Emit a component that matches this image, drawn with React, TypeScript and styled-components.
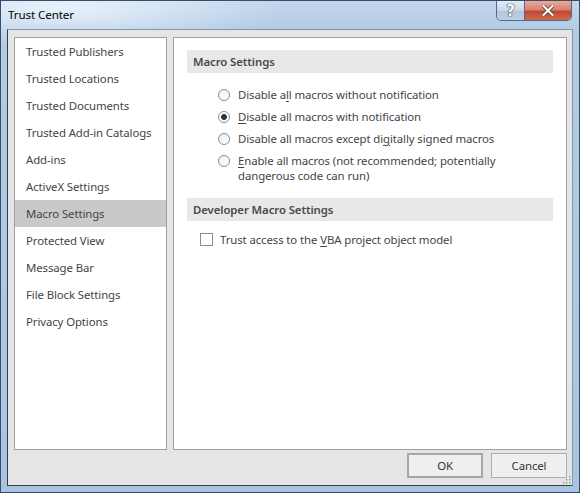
import styled, { createGlobalStyle } from 'styled-components'

const GlobalStyle = createGlobalStyle`
    html, body {
        margin: 0;
        padding: 0;
        background: #ffffff;
    }
    * {
        box-sizing: border-box;
    }
`

const navItems = [
    'Trusted Publishers',
    'Trusted Locations',
    'Trusted Documents',
    'Trusted Add-in Catalogs',
    'Add-ins',
    'ActiveX Settings',
    'Macro Settings',
    'Protected View',
    'Message Bar',
    'File Block Settings',
    'Privacy Options',
]

const App = () => {
    return (
        <>
            <GlobalStyle />
            <Window>
                <TitleBar>
                    <Title>Trust Center</Title>
                    <Caption>
                        <HelpButton>?</HelpButton>
                        <CloseButton>
                            <svg width='12' height='11' viewBox='0 0 12 11'>
                                <path d='M1.5 1 L10.5 10 M10.5 1 L1.5 10' stroke='#4a2a25' strokeWidth='3.6' strokeLinecap='square' />
                                <path d='M1.5 1 L10.5 10 M10.5 1 L1.5 10' stroke='#ffffff' strokeWidth='2.2' strokeLinecap='square' />
                            </svg>
                        </CloseButton>
                    </Caption>
                </TitleBar>
                <Client>
                    <Panels>
                        <Sidebar>
                            {navItems.map(item => (
                                <NavItem key={item} $active={item === 'Macro Settings'}>{item}</NavItem>
                            ))}
                        </Sidebar>
                        <Content>
                            <SectionHeader>Macro Settings</SectionHeader>
                            <Options>
                                <Option>
                                    <Radio />
                                    <span>Disable a<u>l</u>l macros without notification</span>
                                </Option>
                                <Option>
                                    <Radio $checked />
                                    <span><u>D</u>isable all macros with notification</span>
                                </Option>
                                <Option>
                                    <Radio />
                                    <span>Disable all macros except di<u>g</u>itally signed macros</span>
                                </Option>
                                <Option>
                                    <Radio />
                                    <span><u>E</u>nable all macros (not recommended; potentially<br />dangerous code can run)</span>
                                </Option>
                            </Options>
                            <SectionHeader>Developer Macro Settings</SectionHeader>
                            <CheckRow>
                                <Checkbox />
                                <span>Trust access to the <u>V</u>BA project object model</span>
                            </CheckRow>
                        </Content>
                    </Panels>
                    <Footer>
                        <Button $default>OK</Button>
                        <Button>Cancel</Button>
                    </Footer>
                    <Grip>
                        <svg width='9' height='9' viewBox='0 0 9 9'>
                            {[[7, 1], [4, 4], [7, 4], [1, 7], [4, 7], [7, 7]].map(([x, y]) => (
                                <rect key={`${x}-${y}`} x={x} y={y} width='1.5' height='1.5' fill='#9a9a9a' />
                            ))}
                        </svg>
                    </Grip>
                </Client>
            </Window>
        </>
    )
}

export default App

const uiFont = `'Segoe UI', 'Noto Sans', 'Open Sans', sans-serif`

const Window = styled.div`
    width: 580px;
    height: 493px;
    display: flex;
    flex-direction: column;
    padding: 0 6px 6px 6px;
    border: 1px solid #3a4d66;
    background:
        radial-gradient(ellipse 220px 40px at 60px 6px, rgba(235, 243, 252, 0.95), rgba(235, 243, 252, 0) 100%),
        linear-gradient(180deg, #c3d6ec 0%, #b3cbe6 30px, #a9c4e3 100%);
    font-family: ${uiFont};
    letter-spacing: -0.1px;
`

const TitleBar = styled.div`
    height: 28px;
    display: flex;
    align-items: flex-start;
    margin-right: -6px;
`

const Title = styled.div`
    padding-left: 1px;
    line-height: 28px;
    font-size: 11.6px;
    color: #000000;
`

const Caption = styled.div`
    margin-left: auto;
    margin-right: 7px;
    display: flex;
    height: 20px;
    border: 1px solid #4f6a8c;
    border-top: none;
    border-radius: 0 0 5px 5px;
    overflow: hidden;
`

const HelpButton = styled.div`
    width: 28px;
    display: flex;
    align-items: center;
    justify-content: center;
    border-right: 1px solid #4f6a8c;
    background: linear-gradient(180deg, #e2ebf5 0%, #c9d7e8 50%, #b1c4da 51%, #bfd0e3 100%);
    color: #ffffff;
    font: bold 15px 'DejaVu Sans', sans-serif;
    text-shadow: 0 0 1px #2a3a4e, 0 0 1px #2a3a4e, 0 0 1px #2a3a4e;
`

const CloseButton = styled.div`
    width: 46px;
    display: flex;
    align-items: center;
    justify-content: center;
    background: linear-gradient(180deg, #e9a99b 0%, #d88372 45%, #c2482f 55%, #d0694f 100%);
`

const Client = styled.div`
    position: relative;
    flex: 1;
    display: flex;
    flex-direction: column;
    padding: 7px 5px 7px 6px;
    background: #e5e5e5;
    border: 1px solid #3c3c3c;
    border-top-color: #8797ab;
    border-right-color: #8797ab;
`

const Panels = styled.div`
    height: 413px;
    display: flex;
    gap: 6px;
`

const Sidebar = styled.div`
    width: 153px;
    background: #ffffff;
    border: 1px solid #a0a0a0;
    display: flex;
    flex-direction: column;
`

const NavItem = styled.div<{ $active?: boolean }>`
    height: 27px;
    line-height: 27px;
    padding-left: 11px;
    font-size: 11.4px;
    color: #444444;
    white-space: nowrap;
    background: ${p => (p.$active ? '#c9c9c9' : 'transparent')};
`

const Content = styled.div`
    flex: 1;
    background: #ffffff;
    border: 1px solid #a0a0a0;
    padding: 12px 13px;
    display: flex;
    flex-direction: column;
    font-size: 11.4px;
    color: #444444;
`

const SectionHeader = styled.div`
    height: 23px;
    line-height: 23px;
    padding-left: 6px;
    background: #e8e8e8;
    font-weight: 600;
    color: #4a4a4a;
`

const Options = styled.div`
    display: flex;
    flex-direction: column;
    gap: 7px;
    padding: 14px 0 15px 31px;
`

const Option = styled.div`
    display: flex;
    align-items: flex-start;
    gap: 8px;
    line-height: 15px;

    u {
        text-decoration-thickness: 1px;
        text-underline-offset: 2px;
    }
`

const Radio = styled.span<{ $checked?: boolean }>`
    flex: none;
    width: 12px;
    height: 12px;
    margin-top: 2px;
    border-radius: 50%;
    border: 1px solid #8d8d8d;
    background: ${p =>
        p.$checked
            ? 'radial-gradient(circle, #333333 0 2.6px, #ffffff 3.2px)'
            : 'linear-gradient(135deg, #f0f0f0, #ffffff)'};
`

const CheckRow = styled.div`
    display: flex;
    align-items: flex-start;
    gap: 7px;
    margin-top: 11px;
    padding-left: 13px;
    line-height: 15px;

    u {
        text-decoration-thickness: 1px;
        text-underline-offset: 2px;
    }
`

const Checkbox = styled.span`
    flex: none;
    width: 13px;
    height: 13px;
    margin-top: 1px;
    border: 1px solid #8d8d8d;
    background: #ffffff;
`

const Footer = styled.div`
    display: flex;
    justify-content: flex-end;
    gap: 8px;
    margin-top: 3px;
`

const Button = styled.div<{ $default?: boolean }>`
    width: 76px;
    height: 25px;
    display: flex;
    align-items: center;
    justify-content: center;
    font-size: 11.4px;
    color: #333333;
    background: #efefef;
    border: ${p => (p.$default ? '2px solid #a6a6a6' : '1px solid #adadad')};
`

const Grip = styled.div`
    position: absolute;
    right: 1px;
    bottom: 1px;
    width: 9px;
    height: 9px;
    display: flex;
`
